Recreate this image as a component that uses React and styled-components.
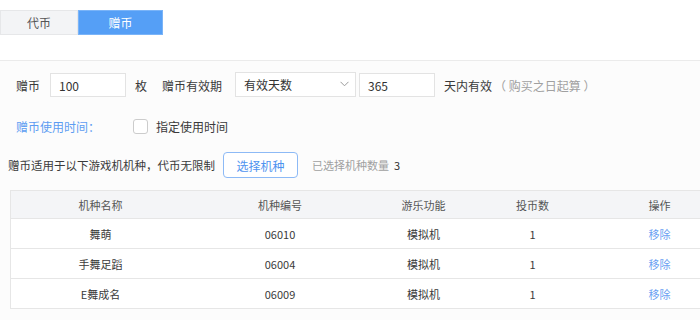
import React from 'react';
import styled, { createGlobalStyle } from 'styled-components';

const GlobalStyle = createGlobalStyle`
  body {
    margin: 0;
    background: #fcfcfc;
    font-family: "Noto Sans CJK SC", "Noto Sans", sans-serif;
    font-size: 12px;
    color: #333333;
  }
`;

const Page = styled.div`
  width: 700px;
  height: 320px;
  overflow: hidden;
  background: #fcfcfc;
`;

const TopBar = styled.div`
  height: 50px;
  padding-top: 10px;
  background: #ffffff;
  border-bottom: 1px solid #ebebeb;
  display: flex;
  align-items: flex-start;
`;

const Tab = styled.div`
  width: ${(p) => p.$width}px;
  height: 25px;
  box-sizing: border-box;
  display: flex;
  align-items: center;
  justify-content: center;
  background: ${(p) => (p.$active ? '#559ff6' : '#f3f4f6')};
  color: ${(p) => (p.$active ? '#ffffff' : '#555555')};
  border: 1px solid ${(p) => (p.$active ? '#7ab4f8' : '#e6e7e9')};
  font-size: 12px;
`;

const Body = styled.div`
  padding-top: 11px;
`;

const FormRow = styled.div`
  display: flex;
  align-items: center;
  height: ${(p) => p.$height || 26}px;
  margin-top: ${(p) => p.$top || 0}px;
  padding-left: ${(p) => p.$left || 16}px;
  white-space: nowrap;
`;

const Label = styled.span`
  color: ${(p) => (p.$blue ? '#5d9cf2' : '#3a3a3a')};
  margin-left: ${(p) => p.$gap || 0}px;
  font-size: ${(p) => p.$size || 12}px;
  width: ${(p) => (p.$width ? `${p.$width}px` : 'auto')};
`;

const Hint = styled.span`
  color: #a0a0a0;
  margin-left: ${(p) => p.$gap || 0}px;
  font-size: ${(p) => p.$size || 12}px;
`;

const Count = styled.span`
  color: #333333;
  margin-left: 5px;
`;

const TextInput = styled.div`
  width: ${(p) => p.$width}px;
  height: 24px;
  box-sizing: border-box;
  margin-left: ${(p) => p.$gap}px;
  padding-left: 8px;
  display: flex;
  align-items: center;
  background: #ffffff;
  border: 1px solid #e3e3e3;
  color: #333333;
`;

const Select = styled.div`
  width: 121px;
  height: 25px;
  box-sizing: border-box;
  margin-left: 13px;
  margin-top: -2px;
  padding: 0 6px 0 8px;
  display: flex;
  align-items: center;
  justify-content: space-between;
  background: #ffffff;
  border: 1px solid #e3e3e3;
  color: #333333;
`;

const Checkbox = styled.span`
  width: 15px;
  height: 15px;
  box-sizing: border-box;
  border: 1px solid #cccccc;
  border-radius: 3px;
  background: #ffffff;
`;

const Button = styled.div`
  width: 75px;
  height: 26px;
  box-sizing: border-box;
  margin-left: 8px;
  display: flex;
  align-items: center;
  justify-content: center;
  border: 1px solid #8dbaf6;
  border-radius: 4px;
  background: #ffffff;
  color: #4f93ef;
`;

const Table = styled.div`
  margin: 12px 0 0 10px;
  width: 720px;
  border: 1px solid #e6e6e6;
  background: #ffffff;
  font-size: 11px;
`;

const Row = styled.div`
  display: grid;
  grid-template-columns: 179px 180px 107px 111px 143px;
  height: ${(p) => (p.$head ? 27 : 29)}px;
  background: ${(p) => (p.$head ? '#f4f5f7' : '#ffffff')};
  color: ${(p) => (p.$head ? '#555555' : '#3a3a3a')};
  border-top: ${(p) => (p.$head ? 'none' : '1px solid #e6e6e6')};
`;

const Cell = styled.div`
  display: flex;
  align-items: center;
  justify-content: center;
  color: ${(p) => (p.$link ? '#6a9ff2' : 'inherit')};
`;

const rows = [
  { name: '舞萌', code: '06010', fn: '模拟机', coins: '1' },
  { name: '手舞足蹈', code: '06004', fn: '模拟机', coins: '1' },
  { name: 'E舞成名', code: '06009', fn: '模拟机', coins: '1' },
];

const Chevron = () => (
  <svg width="9" height="6" viewBox="0 0 9 6">
    <polyline points="0.5,0.8 4.5,4.8 8.5,0.8" fill="none" stroke="#9a9a9a" strokeWidth="1" />
  </svg>
);

export default function App() {
  return (
    <Page>
      <GlobalStyle />
      <TopBar>
        <Tab $width={78}>代币</Tab>
        <Tab $width={85} $active>赠币</Tab>
      </TopBar>
      <Body>
        <FormRow>
          <Label>赠币</Label>
          <TextInput $width={76} $gap={10}>100</TextInput>
          <Label $gap={9}>枚</Label>
          <Label $gap={15}>赠币有效期</Label>
          <Select>
            <span>有效天数</span>
            <Chevron />
          </Select>
          <TextInput $width={76} $gap={3}>365</TextInput>
          <Label $gap={9}>天内有效</Label>
          <Hint $gap={2}>（ 购买之日起算 ）</Hint>
        </FormRow>
        <FormRow $top={18} $height={20}>
          <Label $blue $width={117}>赠币使用时间：</Label>
          <Checkbox />
          <Label $gap={8}>指定使用时间</Label>
        </FormRow>
        <FormRow $top={16} $left={8}>
          <Label $size={11.5}>赠币适用于以下游戏机机种，代币无限制</Label>
          <Button>选择机种</Button>
          <Hint $gap={14} $size={11}>
            已选择机种数量<Count>3</Count>
          </Hint>
        </FormRow>
        <Table>
          <Row $head>
            <Cell>机种名称</Cell>
            <Cell>机种编号</Cell>
            <Cell>游乐功能</Cell>
            <Cell>投币数</Cell>
            <Cell>操作</Cell>
          </Row>
          {rows.map((r) => (
            <Row key={r.code}>
              <Cell>{r.name}</Cell>
              <Cell>{r.code}</Cell>
              <Cell>{r.fn}</Cell>
              <Cell>{r.coins}</Cell>
              <Cell $link>移除</Cell>
            </Row>
          ))}
        </Table>
      </Body>
    </Page>
  );
}
